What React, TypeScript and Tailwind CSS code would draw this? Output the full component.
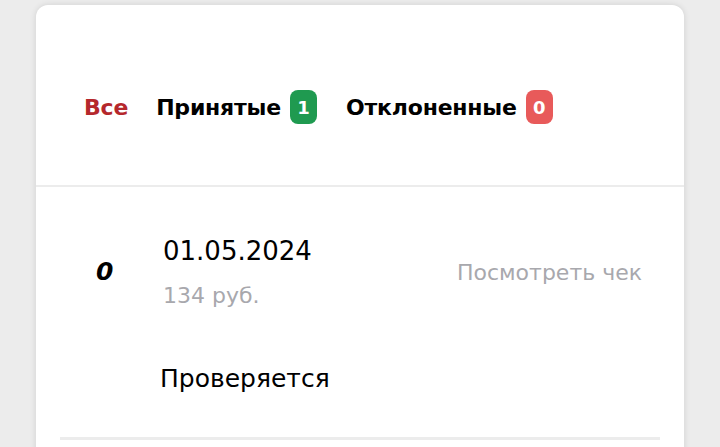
import React from "react";

const font = { fontFamily: '"DejaVu Sans", "Noto Sans", sans-serif' };

function Badge({ value, color }: { value: number; color: string }) {
  return (
    <span
      className={`ml-[9px] inline-flex h-[34px] w-[27px] items-center justify-center rounded-[8px] text-[18px] font-bold text-white ${color}`}
    >
      {value}
    </span>
  );
}

export default function App() {
  return (
    <div className="h-[447px] w-[720px] overflow-hidden bg-[#ececec] px-[36px] pt-[5px]" style={font}>
      <div className="h-[460px] rounded-t-[12px] bg-white shadow-[0_0_6px_rgba(0,0,0,0.12)]">
        <div className="flex h-[180px] items-start pt-[85px] pl-[48px] text-[22px] font-bold tracking-[-0.2px]">
          <span className="flex h-[34px] items-center text-[#b5282c]">Все</span>
          <span className="ml-[28px] flex items-center text-black">
            Принятые
            <Badge value={1} color="bg-[#1f9a50]" />
          </span>
          <span className="ml-[29px] flex items-center text-black">
            Отклоненные
            <Badge value={0} color="bg-[#e85a5a]" />
          </span>
        </div>
        <div className="h-[2px] bg-[#ececec]" />
        <div className="px-[24px]">
          <div className="flex items-center pt-[48px] pl-[36px] pr-[18px]">
            <div className="w-[67px] text-[25px] font-bold italic text-black">0</div>
            <div className="flex flex-1 flex-col">
              <span className="text-[26px] leading-[32px] text-black">01.05.2024</span>
              <span className="mt-[16px] text-[22px] leading-[26px] text-[#a8a8ad]">134 руб.</span>
            </div>
            <span className="text-[22px] text-[#a8a8ad]">Посмотреть чек</span>
          </div>
          <div className="pl-[100px] pt-[54px] text-[25px] leading-[32px] text-black">Проверяется</div>
          <div className="mt-[42px] h-[3px] bg-[#ececec]" />
        </div>
      </div>
    </div>
  );
}
